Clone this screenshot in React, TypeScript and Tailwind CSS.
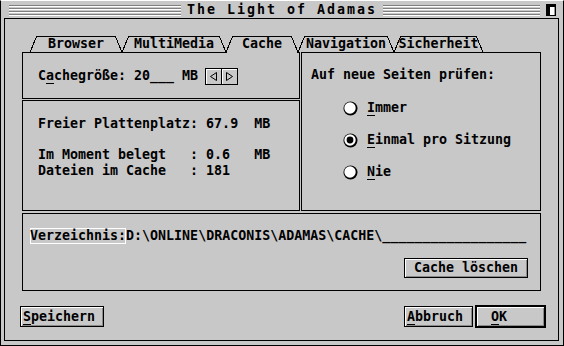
import React from "react";

const GRAY = "bg-[#c8c8c8]";

const tabs = [
  { label: "Browser", w: 92, cls: "w-[92px]" },
  { label: "MultiMedia", w: 104, cls: "w-[104px]" },
  { label: "Cache", w: 72, cls: "w-[72px]", active: true },
  { label: "Navigation", w: 96, cls: "w-[96px]" },
  { label: "Sicherheit", w: 89, cls: "w-[89px]" },
];

function Stripes({ cls }: { cls: string }) {
  return (
    <div className={`${cls} self-start mt-[4px] flex flex-col gap-px`}>
      <div className="h-[2px] border-t border-[#7f7f7f] bg-white" />
      <div className="h-[2px] border-t border-[#7f7f7f] bg-white" />
      <div className="h-[2px] border-t border-[#7f7f7f] bg-white" />
      <div className="h-[2px] border-t border-[#7f7f7f] bg-white" />
    </div>
  );
}

function Radio({ checked }: { checked?: boolean }) {
  return (
    <svg width="15" height="15" viewBox="0 0 15 15">
      <circle cx="7.5" cy="7.5" r="7" fill="black" />
      <circle cx="7" cy="7" r="5.7" fill="white" />
      {checked && <circle cx="7" cy="7" r="3.4" fill="black" />}
    </svg>
  );
}

function U({ children }: { children: React.ReactNode }) {
  return <span className="underline decoration-[1px] underline-offset-[3px]">{children}</span>;
}

export default function App() {
  return (
    <div
      className={`w-[564px] h-[346px] ${GRAY} border border-black border-t-white font-['DejaVu_Sans_Mono',monospace] font-bold text-[13.3px] leading-4 text-black flex flex-col`}
    >
      {/* Title bar */}
      <div className="h-[17px] flex items-center pl-[8px] pr-[6px]">
        <Stripes cls="w-[172px]" />
        <div className="px-[6px] tracking-[2px] whitespace-pre">The Light of Adamas</div>
        <Stripes cls="flex-1" />
        <svg className="ml-[6px]" width="11" height="12" viewBox="0 0 11 12" shapeRendering="crispEdges">
          <rect x="0" y="0" width="10" height="12" fill="black" />
          <rect x="4" y="3" width="5" height="8" fill="white" />
          <rect x="8" y="3" width="1" height="8" fill="#9a9a9a" />
        </svg>
      </div>

      {/* Dialog */}
      <div className="ml-[3px] mr-[4px] h-[323px] border border-black flex flex-col">
        {/* Tabs */}
        <div className="mt-[17px] ml-[25px] flex h-4">
          {tabs.map((t) => (
            <div key={t.label} className={`relative ${t.cls} h-4 flex items-center justify-center`}>
              <svg
                className="absolute left-0 top-0 overflow-visible"
                width={t.w}
                height={16}
                shapeRendering="crispEdges"
              >
                <polyline
                  points={`0,16.5 6.5,0.5 ${t.w - 6.5},0.5 ${t.w},16.5`}
                  fill="none"
                  stroke="black"
                  strokeWidth="1"
                />
              </svg>
              <span className="relative whitespace-pre">{t.label}</span>
              {t.active && <div className={`absolute left-px right-px -bottom-px h-px ${GRAY} z-10`} />}
            </div>
          ))}
        </div>

        {/* Panels */}
        <div className="ml-[17px] w-[519px] flex flex-col gap-[2px]">
          <div className="flex gap-px h-[159px]">
            <div className="w-[278px] flex flex-col gap-px">
              <div className="h-[47px] border border-black flex items-center pl-[15px]">
                <span className="whitespace-pre">
                  C<U>a</U>chegröße: 20___ MB
                </span>
                <div className="ml-[7px] mt-[2px] flex h-[17px] border border-black">
                  <div className="w-4 flex items-center justify-center border-r border-black shadow-[inset_1px_1px_0_#fff]">
                    <svg width="9" height="9" viewBox="0 0 9 9">
                      <polygon points="7.5,0.5 1.5,4.5 7.5,8.5" fill="none" stroke="black" strokeWidth="1" />
                    </svg>
                  </div>
                  <div className="w-[15px] flex items-center justify-center shadow-[inset_1px_1px_0_#fff]">
                    <svg width="9" height="9" viewBox="0 0 9 9">
                      <polygon points="1.5,0.5 7.5,4.5 1.5,8.5" fill="none" stroke="black" strokeWidth="1" />
                    </svg>
                  </div>
                </div>
              </div>
              <div className="h-[111px] border border-black pl-[15px] pt-[15px] flex flex-col">
                <div className="whitespace-pre">Freier Plattenplatz: 67.9  MB</div>
                <div className="mt-[15px] whitespace-pre">Im Moment belegt   : 0.6   MB</div>
                <div className="whitespace-pre">Dateien im Cache   : 181</div>
              </div>
            </div>
            <div className="w-[240px] border border-black pl-[9px] pt-[14px] flex flex-col">
              <div className="whitespace-pre">Auf neue Seiten prüfen:</div>
              <div className="mt-[9px] flex flex-col">
                <div className="h-8 flex items-center">
                  <div className="ml-[32px] flex">
                    <Radio />
                  </div>
                  <span className="ml-[9px]">
                    <U>I</U>mmer
                  </span>
                </div>
                <div className="h-8 flex items-center">
                  <div className="ml-[32px] flex">
                    <Radio checked />
                  </div>
                  <span className="ml-[9px] whitespace-pre">
                    <U>E</U>inmal pro Sitzung
                  </span>
                </div>
                <div className="h-8 flex items-center">
                  <div className="ml-[32px] flex">
                    <Radio />
                  </div>
                  <span className="ml-[9px]">
                    <U>N</U>ie
                  </span>
                </div>
              </div>
            </div>
          </div>
          <div className="h-[78px] border border-black pl-[7px] pt-[14px] flex flex-col">
            <div className="flex whitespace-pre">
              <span className="shadow-[inset_0_0_0_1px_#fff]">Verzeichnis:</span>
              <span>{"D:\\ONLINE\\DRACONIS\\ADAMAS\\CACHE\\__________________"}</span>
            </div>
            <div className="mt-[14px] mr-[12px] self-end w-[124px] h-[20px] border border-black flex items-center justify-center shadow-[inset_1px_1px_0_#fff,inset_-1px_-1px_0_#8a8a8a] whitespace-pre">
              Cache löschen
            </div>
          </div>
        </div>

        {/* Bottom buttons */}
        <div className="mt-[14px] h-[23px] ml-[15px] mr-[12px] flex items-center justify-between">
          <div className="w-[84px] h-[21px] border border-black flex items-center pl-[2px] shadow-[inset_1px_1px_0_#fff,inset_-1px_-1px_0_#8a8a8a]">
            <U>S</U>peichern
          </div>
          <div className="flex items-center gap-[2px]">
            <div className="w-[69px] h-[21px] border border-black flex items-center pl-[2px] shadow-[inset_1px_1px_0_#fff,inset_-1px_-1px_0_#8a8a8a]">
              <U>A</U>bbruch
            </div>
            <div className="w-[71px] h-[23px] border-2 border-black flex items-center pl-[14px] shadow-[inset_1px_1px_0_#fff,inset_-1px_-1px_0_#8a8a8a]">
              <U>O</U>K
            </div>
          </div>
        </div>
      </div>
    </div>
  );
}
